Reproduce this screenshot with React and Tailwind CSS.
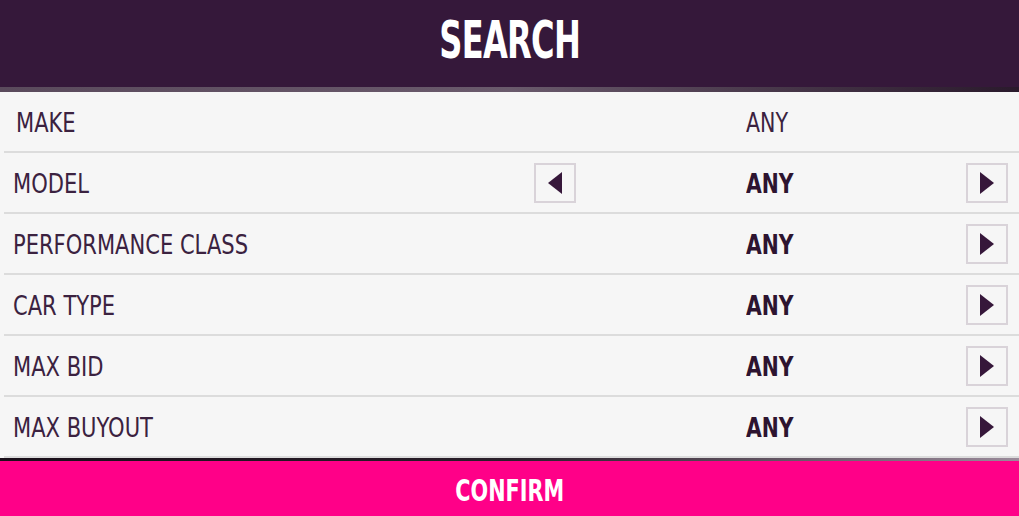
import React from 'react'

const rows = [
  { label: 'MAKE', value: 'ANY', bold: false, left: false, right: false },
  { label: 'MODEL', value: 'ANY', bold: true, left: true, right: true },
  { label: 'PERFORMANCE CLASS', value: 'ANY', bold: true, left: false, right: true },
  { label: 'CAR TYPE', value: 'ANY', bold: true, left: false, right: true },
  { label: 'MAX BID', value: 'ANY', bold: true, left: false, right: true },
  { label: 'MAX BUYOUT', value: 'ANY', bold: true, left: false, right: true },
]

const font = { fontFamily: '"DejaVu Sans Condensed", "DejaVu Sans", sans-serif', fontStretch: 'condensed' }

function ArrowButton({ dir }) {
  return (
    <div className='w-[42px] h-[40px] border-2 border-[#d9d3d9] flex items-center justify-center'>
      <svg width='16' height='22' viewBox='0 0 16 22'>
        {dir === 'left'
          ? <polygon points='15,0 15,22 1,11' fill='#36173a' />
          : <polygon points='1,0 1,22 15,11' fill='#36173a' />}
      </svg>
    </div>
  )
}

export default function App() {
  return (
    <div className='w-[1019px] h-[516px] flex flex-col bg-[#f6f6f6] overflow-hidden' style={font}>
      {/* header */}
      <div className='h-[87px] bg-[#35183a] flex items-center justify-center pb-[6px]'>
        <span className='text-white font-bold text-[51px] leading-none inline-block scale-x-[0.7] tracking-[-1px]'>SEARCH</span>
      </div>
      <div className='h-[5px] bg-gradient-to-r from-[#5a4a5c] via-[#6a5a6c] to-[#2a1a2c]'></div>

      {/* rows */}
      <div className='flex flex-col'>
        {rows.map((r) => (
          <div key={r.label} className='h-[61px] flex items-center border-b-2 border-[#dcdcdc] ml-[4px]'>
            <div className={`w-[530px] pt-[6px] ${r.label === 'MAKE' ? 'pl-[12px]' : 'pl-[9px]'}`}>
              <span className='inline-block origin-left scale-x-[0.9] text-[26px] leading-none text-[#3b2240]'>{r.label}</span>
            </div>
            <div className='w-[42px]'>{r.left && <ArrowButton dir='left' />}</div>
            <div className='w-[170px]'></div>
            <div className='flex-1 pt-[6px]'>
              <span className={`inline-block origin-left text-[26px] leading-none ${r.bold ? 'font-bold text-[#2d1430] scale-x-[0.87]' : 'text-[#3b2240] scale-x-[0.88]'}`}>{r.value}</span>
            </div>
            <div className='w-[42px] mr-[11px]'>{r.right && <ArrowButton dir='right' />}</div>
          </div>
        ))}
      </div>

      <div className='h-[3px] bg-gradient-to-r from-[#1a0f1a] via-[#2a1f2a] to-[#9a8a9a]'></div>
      {/* confirm */}
      <div className='flex-1 bg-[#ff0088] flex items-center justify-center pt-[4px]'>
        <span className='text-white font-bold text-[30px] leading-none inline-block scale-x-[0.77]'>CONFIRM</span>
      </div>
    </div>
  )
}
